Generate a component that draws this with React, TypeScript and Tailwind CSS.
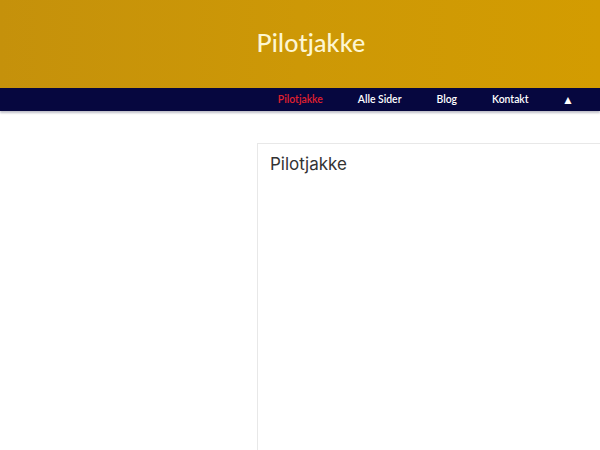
export default function App() {
  const links = [
    { label: 'Pilotjakke', active: true },
    { label: 'Alle Sider' },
    { label: 'Blog' },
    { label: 'Kontakt' },
  ];

  return (
    <div className="min-h-[450px] bg-white overflow-hidden" style={{ fontFamily: 'Lato, "Open Sans", sans-serif' }}>
      {/* Header */}
      <header className="h-[88px] bg-gradient-to-r from-[#c5910b] via-[#cd9806] to-[#d39c01] flex items-center justify-center">
        <h1 className="text-[25px] font-medium text-[#fdf6d2] tracking-[0.2px] -mt-[2px] ml-[22px]">Pilotjakke</h1>
      </header>

      {/* Nav */}
      <nav className="h-[23px] bg-[#06073f] flex items-center justify-end pr-[10px] shadow-[0_2px_2px_rgba(0,0,40,0.25)]">
        {links.map((l) => (
          <a
            key={l.label}
            className={`px-[17.5px] text-[10.4px] font-semibold leading-none ${l.active ? 'text-[#e0202e]' : 'text-white'}`}
          >
            {l.label}
          </a>
        ))}
        <span className="px-[16px] text-[12px] text-white leading-none">▲</span>
      </nav>

      {/* Content */}
      <div className="flex pt-[32px]">
        <aside className="w-[257px] shrink-0" />
        <main className="flex-1 h-[307px] border-t border-l border-[#e8e8e8] bg-white px-[12px] pt-[8px]">
          <h2 className="text-[17px] text-[#333] font-normal" style={{ fontFamily: 'Inter, Roboto, sans-serif' }}>
            Pilotjakke
          </h2>
        </main>
      </div>
    </div>
  );
}
